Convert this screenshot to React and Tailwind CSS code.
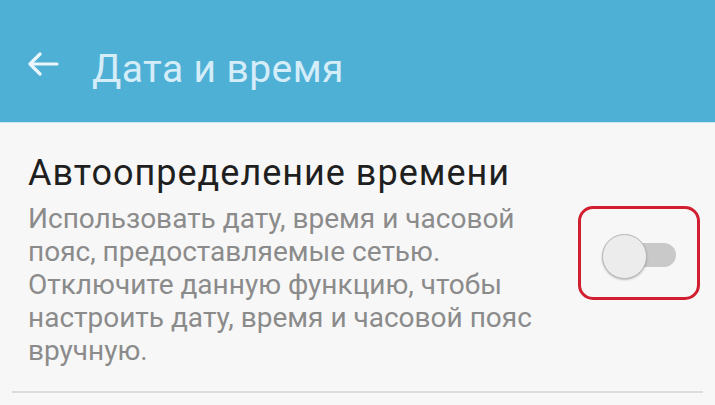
import React from 'react'

export default function App() {
  return (
    <div className="w-[715px] h-[405px] overflow-hidden bg-[#f7f7f7] flex flex-col" style={{ fontFamily: 'Roboto, "Liberation Sans", sans-serif' }}>
      <header className="h-[123px] bg-[#4fb0d6] flex items-start pl-[27px] border-b border-[#cfe6ef]">
        <svg width="32" height="24" viewBox="0 0 32 24" className="mt-[52px]">
          <path d="M30 12H3M13 2L3 12l10 10" fill="none" stroke="#eaf6fb" strokeWidth="3.2" strokeLinecap="round" strokeLinejoin="round" />
        </svg>
        <h1 className="ml-[33px] mt-[46px] text-[39px] leading-[46px] text-[#d4edf8] tracking-[0.4px]">Дата и время</h1>
      </header>
      <div className="flex-1 flex flex-col">
        <div className="flex items-start pt-[28px] pl-[28px] pr-[15px]">
          <div className="flex-1">
            <div className="text-[36px] leading-[44px] text-[#1f1f1f] tracking-[1px]">Автоопределение времени</div>
            <p className="mt-[7px] text-[28px] leading-[33px] text-[#8b8b8b] whitespace-nowrap">
              Использовать дату, время и часовой<br />
              пояс, предоставляемые сетью.<br />
              Отключите данную функцию, чтобы<br />
              настроить дату, время и часовой пояс<br />
              вручную.
            </p>
          </div>
          <div className="mt-[55px] w-[122px] h-[94px] shrink-0 border-[3px] border-[#d21f2f] rounded-[15px] flex items-start pt-[34px] pl-[25px]">
            <div className="relative w-[70px] h-[24px] rounded-full bg-[#c9c9c9]">
              <div className="absolute left-[-4px] top-[-9px] w-[45px] h-[45px] rounded-full bg-[#ececec] border border-[#b8b8b8] shadow-[0_1px_2px_rgba(0,0,0,0.25)]" />
            </div>
          </div>
        </div>
        <div className="mt-auto mb-[12px] mx-[12px] h-[2px] bg-[#dcdcdc]" />
      </div>
    </div>
  )
}
